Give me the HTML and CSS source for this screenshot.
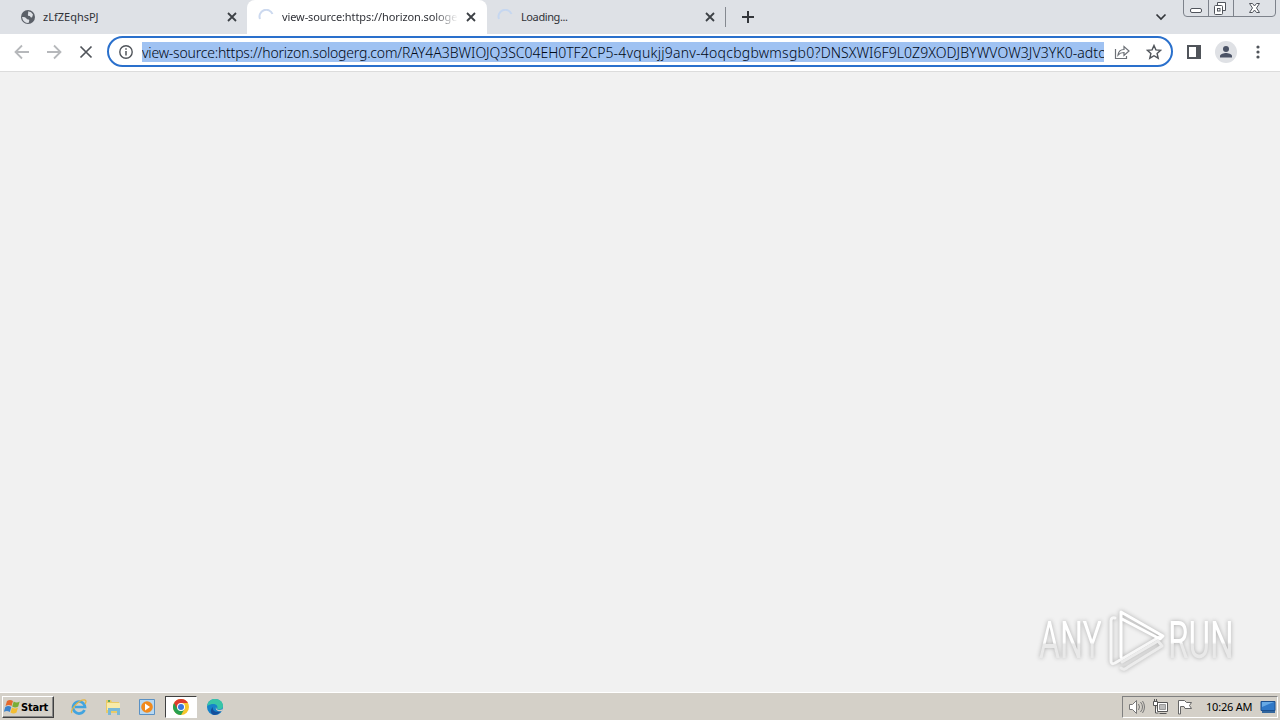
FILE: index.html
```
<!DOCTYPE html>
<html lang="en">
<head>
	<meta charset="utf-8">
	<title>view-source</title>
	<link rel="stylesheet" href="styles.css">
</head>
<body>
	<div class="tabs">
		<div class="tab first">
			<svg class="fav" width="16" height="16" viewBox="0 0 16 16"><circle cx="8" cy="8" r="7" fill="#5b6068"/><path d="M2 8q3-.5 4 1t2.500 1.500T8.500 14Q3 14 2 8zM8 2.500q3-.5 5 3l-1 3q-2 0-2-1.500H8.500q-1-1-.5-2t0-2.500z" fill="#dee1e6"/></svg>
			<span class="title">zLfZEqhsPJ</span>
			<svg class="x" width="10" height="10" viewBox="0 0 10 10"><path d="M1 1l8 8M9 1l-8 8"/></svg>
		</div>
		<div class="tab active">
			<svg class="fav" width="16" height="16" viewBox="0 0 16 16"><path d="M2 10A6.500 6.500 0 0 1 14.500 5" fill="none" stroke="#ccd9ef" stroke-width="2"/></svg>
			<span class="title fade">view-source:https://horizon.sologerg</span>
			<svg class="x" width="10" height="10" viewBox="0 0 10 10"><path d="M1 1l8 8M9 1l-8 8"/></svg>
		</div>
		<div class="tab last">
			<svg class="fav" width="16" height="16" viewBox="0 0 16 16"><path d="M2 10A6.500 6.500 0 0 1 14.500 5" fill="none" stroke="#c6d7f0" stroke-width="2"/></svg>
			<span class="title loading">Loading...</span>
			<svg class="x" width="10" height="10" viewBox="0 0 10 10"><path d="M1 1l8 8M9 1l-8 8"/></svg>
		</div>
		<div class="sep"></div>
		<svg class="plus" width="12" height="12" viewBox="0 0 12 12"><path d="M6 0v12M0 6h12" stroke="#33363b" stroke-width="2"/></svg>
		<svg class="chevron" width="12" height="8" viewBox="0 0 12 8"><path d="M1.500 1.500L6 6l4.500-4.500" fill="none" stroke="#33363b" stroke-width="1.700"/></svg>
		<svg class="winbtns" width="93" height="17" viewBox="0 0 93 17" fill="none" stroke="#7d828b">
			<path d="M.5 0v13q0 3.500 3.500 3.500h85q3.500 0 3.500-3.500V0M25.500 0v16M50.500 0v16"/>
			<g stroke="#50545c"><rect x="7.500" y="8.500" width="11" height="4" rx="1.500" fill="#fff"/>
			<path d="M34.500 5.500v-3h8v8h-3" fill="#fff"/><rect x="31.500" y="5.500" width="8" height="9" rx="1" fill="#fff"/><rect x="34.500" y="8.500" width="2.500" height="2.500"/>
			<path d="M66.500 3.500h3l2 2.500 2-2.500h3l-3 4.500 3 4.500h-3l-2-2.500-2 2.500h-3l3-4.500z" fill="#fff"/></g>
		</svg>
	</div>
	<div class="toolbar">
		<svg class="back" width="16" height="16" viewBox="0 0 16 16"><path d="M15 8H2M8 1.500L1.500 8 8 14.500"/></svg>
		<svg class="forward" width="16" height="16" viewBox="0 0 16 16"><path d="M1 8h13M8 1.500L14.500 8 8 14.500"/></svg>
		<svg class="stop" width="14" height="14" viewBox="0 0 14 14"><path d="M1.500 1.500l11 11M12.500 1.500l-11 11"/></svg>
		<div class="omnibox">
			<svg class="info" width="14" height="14" viewBox="0 0 14 14"><circle cx="7" cy="7" r="6.200" fill="none" stroke="#50545a" stroke-width="1.400"/><path d="M7 6v4.500M7 3.300v1.500" stroke="#50545a" stroke-width="1.500"/></svg>
			<div class="url"><span class="host">view-source:https://horizon.sologerg.com/</span><span class="p1">RAY4A3BWIOJQ3SC04EH0TF2CP5</span><span class="p2">-4vqukjj9anv-4oqcbgbwmsgb0?</span><span class="p3">DNSXWI6F9L0Z9XODJBYWVOW3JV3YK0-adt</span><span>o</span></div>
			<svg class="share" width="16" height="16" viewBox="0 0 16 16" fill="none" stroke="#6c7076" stroke-width="1.200"><path d="M1.500 5v9.500h11V12M4 11c.5-4 2.500-5.500 6-5.500v-3L15 7l-5 4.500v-3c-3 0-4.500.7-6 2.500z"/></svg>
			<svg class="star" width="16" height="16" viewBox="0 0 16 16"><path d="M8 1.500l1.900 4.400 4.800.4-3.600 3.200 1.100 4.700L8 11.700l-4.200 2.500 1.100-4.700L1.300 6.300l4.800-.4z" fill="none" stroke="#50545a" stroke-width="1.400"/></svg>
		</div>
		<svg class="panel" width="14" height="14" viewBox="0 0 14 14"><path d="M1 1h12v12H1z" fill="none" stroke="#50545a" stroke-width="2"/><path d="M9 0h5v14H9z" fill="#50545a"/></svg>
		<svg class="avatar" width="22" height="22" viewBox="0 0 22 22"><circle cx="11" cy="11" r="11" fill="#dfe1e5"/><circle cx="11" cy="8" r="3" fill="#4a5265"/><path d="M5 16.500v-1.500c0-2 4-3 6-3s6 1 6 3v1.500z" fill="#4a5265"/></svg>
		<svg class="menu" width="4" height="14" viewBox="0 0 4 14" fill="#50545a"><circle cx="2" cy="2" r="1.600"/><circle cx="2" cy="7" r="1.600"/><circle cx="2" cy="12" r="1.600"/></svg>
	</div>
	<div class="page">
		<div class="watermark">
			<span class="word any">ANY</span>
			<svg width="58" height="64" viewBox="0 0 58 64" fill="none" stroke-width="3" stroke-linejoin="round" stroke-linecap="round">
				<path d="M7 9q-4-1-4 3v40q0 4 4 2l46-27" stroke="#f7f7f7"/>
				<path d="M13 48V3l42 24-3 3-38-20" stroke="#fff"/>
				<path d="M13 59q3 3 7-1l34-21-4-5-36 21" stroke="#ececec"/>
			</svg>
			<span class="word run">RUN</span>
		</div>
	</div>
	<div class="taskbar">
		<div class="start">
			<svg width="17" height="16" viewBox="0 0 17 16"><path d="M3 2q3-2 6 0L7.500 7Q5 5 1.500 7z" fill="#e5692d"/><path d="M9.700 2.400q3 2 6 0l-1.500 5q-3 2-6 0z" fill="#79ad37"/><path d="M1.300 8q3-2 6 0l-1.500 5q-3-2-6 0z" fill="#3c83cc"/><path d="M8 8.400q3 2 6 0l-1.500 5q-3 2-6 0z" fill="#f3bd32"/></svg>
			<span>Start</span>
		</div>
		<div class="quick">
			<div class="app"><svg width="18" height="18" viewBox="0 0 18 18"><path d="M14.500 12a6 6 0 1 1 .5-3H5" fill="none" stroke="#42a4df" stroke-width="2.700"/><path d="M2 15C-1 13 9 1 15 2q2 1 0 4" fill="none" stroke="#e3b544" stroke-width="1.300"/></svg></div>
			<div class="app"><svg width="18" height="18" viewBox="0 0 18 18"><path d="M2 2h5l1 2h7v11H2z" fill="#e9cb67"/><path d="M3 5h13v7H3z" fill="#f8eba9"/><path d="M4 17v-7h12v7h-3v-4H7v4z" fill="#79b9d8"/><path d="M4 2h2v2H4z" fill="#60a760"/></svg></div>
			<div class="app"><svg width="18" height="18" viewBox="0 0 18 18"><path d="M1.500 1.500h15v15h-15z" fill="#b7d8f2" stroke="#5a91c4"/><circle cx="9" cy="9" r="5.800" fill="#f18a1d"/><path d="M7 5.500v7l5-3.500z" fill="#fff"/></svg></div>
			<div class="app pressed"><svg width="16" height="16" viewBox="0 0 16 16"><circle cx="8" cy="8" r="8" fill="#f6c62d"/><path d="M1.070 4A8 8 0 0 0 8 16l3.500-6L8 8z" fill="#28a050"/><path d="M8 4h6.930A8 8 0 0 0 1.070 4L4.500 10z" fill="#de3c2f"/><circle cx="8" cy="8" r="4" fill="#fff"/><circle cx="8" cy="8" r="3" fill="#3977df"/></svg></div>
			<div class="app"><svg width="18" height="18" viewBox="0 0 18 18"><circle cx="9" cy="9" r="8" fill="#1683c9"/><path d="M1.200 8C2 3 5 1 9 1c5 0 8 3 8 7 0 3-3 4-6 3 2-4-3-7-9.800-3z" fill="#38c5a7"/><path d="M7 9c-1 4 3 6 8 4-2 3-5 4-7 4-4-1-4-6-1-8z" fill="#164f9b"/><path d="M10 9c0 3 3 4 7 2l-1 2c-4 1-7-1-6-4z" fill="#d4d0c8"/></svg></div>
		</div>
		<div class="tray">
			<svg width="18" height="16" viewBox="0 0 18 16" fill="none" stroke="#777"><path d="M1.500 5.500h3l4-4v13l-4-4h-3z" fill="#fff"/><path d="M10.500 5q2 3 0 6M12.500 3q4 5 0 10M14.500 2q4 6 0 12"/></svg>
			<svg class="net" width="18" height="16" viewBox="0 0 18 16" fill="#fff" stroke="#555"><path d="M5.500 3.500h10v9h-10zM7.500 14.500h7M1.500 2.500h4v4h-4zM2.500 0v3M4.500 0v3M3.500 7v7h3"/><path d="M7.500 5.500h6v5h-6z" fill="#bbb" stroke="#999"/></svg>
			<svg class="flag" width="16" height="16" viewBox="0 0 16 16" fill="#fff" stroke="#666"><path d="M1.500 15V1.500h6l2 2h5l-2 3 2 3H8l-1-2H3.500V15z"/></svg>
			<span class="clock">10:26 AM</span>
			<svg class="desk" width="16" height="14" viewBox="0 0 16 14"><path d="M1 1.500h14v9H1z" fill="#2f78c7" stroke="#1c508f"/><path d="M2 2h12L2 7z" fill="#66a9e5"/><path d="M2 11h13v2H2z" fill="#32669d"/></svg>
		</div>
	</div>
</body>
</html>
```
FILE: styles.css
```
* { box-sizing: border-box; }
body {
	margin: 0;
	width: 1280px;
	height: 720px;
	overflow: hidden;
	display: flex;
	flex-direction: column;
	background: #f1f1f1;
	font-family: "Noto Sans", "DejaVu Sans", sans-serif;
	color: #303238;
}
svg { flex: none; display: block; }

.tabs { height: 34px; display: flex; background: #dee1e6; }
.tab { width: 240px; height: 34px; display: flex; align-items: center; padding: 0 12px 0 11px; }
.first { width: 247px; padding: 0 10px 0 20px; }
.active { background: #fff; border-radius: 8px 8px 0 0; }
.last { width: 238px; padding-right: 10px; padding-left: 10px; }
.title { flex: 1; margin-left: 7px; font-size: 11px; line-height: 16px; white-space: nowrap; overflow: hidden; }
.loading { margin-left: 8px; letter-spacing: -.4px; }
.fade { flex: none; width: 176px; margin-right: 8px; margin-left: 8px; letter-spacing: -.1px; -webkit-mask-image: linear-gradient(90deg, #000 86%, transparent); mask-image: linear-gradient(90deg, #000 86%, transparent); }
.x { fill: none; stroke: #3c4045; stroke-width: 1.800; }
.sep { width: 1px; height: 20px; margin-top: 7px; background: #858990; }
.plus { margin: 11px 0 0 16px; }
.chevron { margin: 13px 16px 0 auto; }
.winbtns { margin-right: 4px; }

.toolbar { height: 38px; display: flex; align-items: center; padding: 0 20px 2px 14px; background: #fff; border-bottom: 1px solid #dcdcdc; }
.back, .forward { fill: none; stroke: #b6b8bb; stroke-width: 1.800; }
.forward { margin-left: 16px; }
.stop { margin-left: 17px; fill: none; stroke: #50545a; stroke-width: 1.700; }
.omnibox { width: 1066px; height: 31px; margin-left: 14px; display: flex; align-items: center; padding: 0 9px 0 10px; border: 2px solid #2a70cc; border-radius: 16px; }
.url { width: 962px; height: 20px; margin-left: 9px; overflow: hidden; white-space: nowrap; background: #9fc2f2; color: #000814; font-size: 14px; line-height: 22px; font-weight: 300; }
.host { letter-spacing: -.2px; }
.p1 { letter-spacing: -.04px; }
.p2 { letter-spacing: .25px; }
.p3 { letter-spacing: .07px; }
.share { margin-left: 10px; }
.star { margin-left: 16px; }
.panel { margin-left: 14px; }
.avatar { margin-left: 14px; }
.menu { margin-left: auto; }

.page { height: 620px; display: flex; justify-content: flex-end; align-items: flex-end; padding: 0 48px 19px 0; }
.watermark { display: flex; align-items: center; filter: drop-shadow(0 0 2px #aaa); }
.word { display: block; width: 100px; font-family: Roboto, sans-serif; font-size: 52px; line-height: 58px; transform-origin: left; background: linear-gradient(#fff 52%, #e9e9e9 56%); -webkit-background-clip: text; background-clip: text; color: transparent; }
.any { transform: scaleX(.62); margin-right: -31px; }
.run { transform: scaleX(.64); margin-left: 2px; margin-right: -36px; }

.taskbar { height: 28px; display: flex; align-items: center; padding: 1px 2px 0; background: #d4d0c8; border-top: 1px solid #fff; }
.start { width: 52px; height: 22px; display: flex; align-items: center; padding-left: 1px; border: 1px solid; border-color: #fff #404040 #404040 #fff; box-shadow: inset -1px -1px #888; font: bold 11px "DejaVu Sans Condensed", "DejaVu Sans", sans-serif; letter-spacing: -.2px; color: #000; }
.quick { display: flex; margin-left: 9px; gap: 2px; }
.app { width: 32px; height: 22px; display: flex; align-items: center; justify-content: center; }
.pressed { background: #fff; border: 1px solid; border-color: #404040 #fff #fff #404040; }
.tray { width: 156px; height: 22px; margin-left: auto; display: flex; align-items: center; padding-left: 5px; border: 1px solid; border-color: #808080 #fff #fff #808080; }
.net { margin-left: 6px; }
.flag { margin-left: 7px; }
.clock { width: 48px; margin-left: 13px; font-size: 11px; line-height: 16px; letter-spacing: -.2px; white-space: nowrap; color: #000; }
.desk { margin-left: 6px; }
```
